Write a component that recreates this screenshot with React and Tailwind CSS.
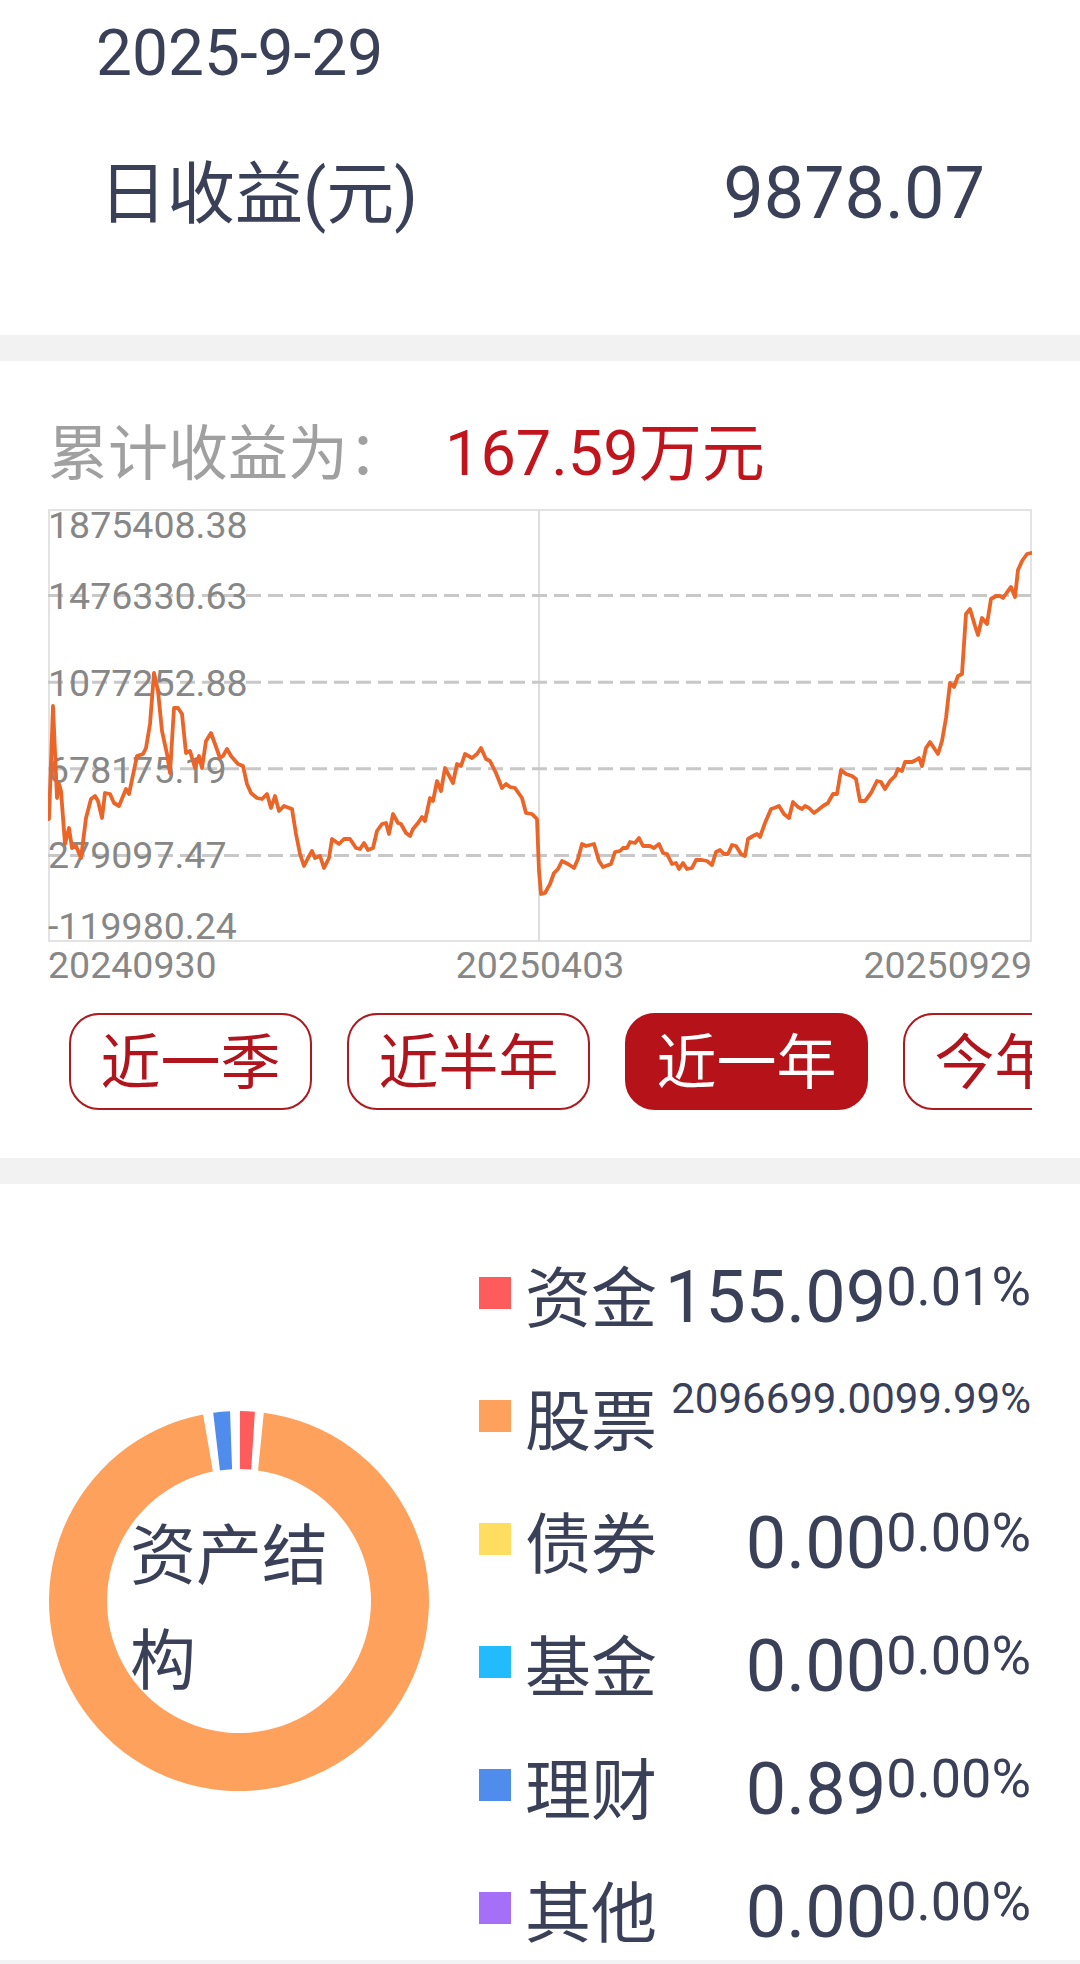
import React from "react";

const DARK = "#3a4058";

const PTS = [
  [49,818],[53,705],[57,797],[59,783],[61,790],[65,843],[69,827],[72,847],[76,845],[81,857],
  [86,817],[91,798],[95,795],[98,800],[102,817],[105,792],[110,793],[114,802],[119,805],[126,788],
  [129,793],[137,755],[143,753],[146,747],[150,723],[154,672],[158,690],[162,730],[167,753],[170,772],
  [174,707],[178,707],[182,713],[186,752],[190,750],[195,767],[199,755],[202,767],[206,740],[211,732],
  [215,743],[220,757],[223,755],[227,748],[231,755],[238,763],[243,765],[247,783],[251,792],[257,797],
  [262,798],[267,793],[271,807],[275,795],[279,810],[284,805],[292,808],[296,833],[300,853],[304,865],
  [308,857],[312,850],[315,857],[320,855],[324,867],[329,857],[332,838],[339,843],[344,838],[350,838],
  [356,847],[360,848],[364,842],[368,849],[373,847],[377,830],[382,823],[386,822],[389,833],[393,813],
  [398,822],[401,823],[406,832],[410,835],[413,828],[418,822],[422,816],[425,820],[430,797],[433,800],
  [437,780],[441,790],[445,767],[453,782],[457,763],[461,765],[465,753],[472,757],[477,753],[481,747],
  [486,758],[490,760],[496,772],[502,787],[506,783],[510,786],[515,787],[522,797],[526,812],[532,813],
  [537,818],[539,870],[541,893],[545,892],[550,883],[554,872],[558,868],[562,860],[568,863],[574,867],
  [578,858],[582,843],[586,845],[594,843],[599,860],[603,866],[611,863],[615,851],[620,850],[623,847],
  [627,847],[630,841],[635,842],[639,837],[643,845],[650,845],[654,847],[659,843],[663,852],[667,853],
  [672,863],[676,862],[679,868],[683,862],[687,868],[692,867],[696,859],[702,859],[707,860],[712,864],
  [716,851],[720,849],[724,853],[728,853],[732,844],[736,845],[741,853],[745,855],[748,838],[753,835],
  [757,833],[760,836],[765,822],[771,808],[774,807],[779,805],[784,813],[789,817],[793,801],[798,806],
  [802,808],[805,805],[809,807],[814,812],[818,809],[823,805],[828,802],[829,800],[833,793],[837,793],
  [841,769],[846,773],[852,775],[856,778],[860,800],[865,800],[871,792],[877,780],[881,781],[885,788],
  [890,780],[895,775],[898,768],[902,770],[905,761],[912,761],[916,759],[919,757],[922,765],[926,747],
  [930,741],[934,747],[938,753],[942,740],[946,717],[950,682],[954,686],[958,675],[962,673],[966,613],
  [970,608],[975,625],[978,634],[982,617],[987,623],[991,598],[996,595],[1000,595],[1003,597],[1008,590],
  [1011,586],[1015,596],[1018,569],[1022,560],[1027,553],[1031,552]
];

function Chart() {
  const d = PTS.map((p, i) => (i ? "L" : "M") + p[0] + " " + p[1]).join(" ");
  const grid = [594.6, 681.2, 767.8, 854.4];
  const labels = [
    ["1875408.38", 537],
    ["1476330.63", 608],
    ["1077252.88", 695],
    ["678175.19", 782],
    ["279097.47", 867],
    ["-119980.24", 938],
  ];
  return (
    <svg width="984" height="433" viewBox="48 508 984 433" className="block">
      <rect x="49" y="509" width="982" height="431" fill="#ffffff" stroke="#e3e3e3" strokeWidth="2" />
      <line x1="539" y1="508" x2="539" y2="941" stroke="#dedede" strokeWidth="2" />
      {grid.map((y) => (
        <line key={y} x1="48" x2="1032" y1={y} y2={y} stroke="#c8c8c8" strokeWidth="3" strokeDasharray="15 7" />
      ))}
      {labels.map(([t, y]) => (
        <text key={t} x="48" y={y} fontSize="37.5" fill="#878787" fontFamily="Roboto, sans-serif">
          {t}
        </text>
      ))}
      <path d={d} fill="none" stroke="#eb6428" strokeWidth="3.8" strokeLinejoin="round" strokeLinecap="round" />
    </svg>
  );
}

function arcPath(cx, cy, R, r, a1o, a2o, a1i, a2i) {
  const rad = (a) => (a * Math.PI) / 180;
  const pt = (rho, a) => [cx + rho * Math.sin(rad(a)), cy - rho * Math.cos(rad(a))];
  const [x1, y1] = pt(R, a1o);
  const [x2, y2] = pt(R, a2o);
  const [x3, y3] = pt(r, a2i);
  const [x4, y4] = pt(r, a1i);
  const lo = a2o - a1o > 180 ? 1 : 0;
  const li = a2i - a1i > 180 ? 1 : 0;
  return `M${x1} ${y1} A${R} ${R} 0 ${lo} 1 ${x2} ${y2} L${x3} ${y3} A${r} ${r} 0 ${li} 0 ${x4} ${y4} Z`;
}

function Donut() {
  const cx = 191, cy = 191, R = 190, r = 132;
  const segs = [
    { c: "#fe5c5c", o: [0.3, 4.8], i: [0.4, 5.3] },
    { c: "#fda15c", o: [7.5, 349.1], i: [8.3, 348.6] },
    { c: "#4f8ceb", o: [352.2, 357.3], i: [351.7, 357.0] },
  ];
  return (
    <div className="relative w-[382px] h-[382px] shrink-0 ml-[48px]">
      <svg width="382" height="382" viewBox="0 0 382 382" className="block">
        {segs.map((s) => (
          <path key={s.c} d={arcPath(cx, cy, R, r, s.o[0], s.o[1], s.i[0], s.i[1])} fill={s.c} />
        ))}
      </svg>
      <div className="absolute left-[82px] top-[94px] w-[204px] text-[66px] leading-[105px]" style={{ color: DARK }}>
        资产结构
      </div>
    </div>
  );
}

const LEGEND = [
  { name: "资金", color: "bg-[#fe5c5c]", value: "155.09", pct: "0.01%" },
  { name: "股票", color: "bg-[#fea15c]", value: "2096699.00", pct: "99.99%", small: true },
  { name: "债券", color: "bg-[#fedd60]", value: "0.00", pct: "0.00%" },
  { name: "基金", color: "bg-[#22bbfd]", value: "0.00", pct: "0.00%" },
  { name: "理财", color: "bg-[#4f8ceb]", value: "0.89", pct: "0.00%" },
  { name: "其他", color: "bg-[#a66ff7]", value: "0.00", pct: "0.00%" },
];

function LegendRow({ item }) {
  return (
    <div className="flex items-start h-[80px]">
      <div className={`w-[32px] h-[32px] mt-[24px] shrink-0 ${item.color}`} />
      <div className="ml-[14px] mt-[14px] text-[66px] leading-[66px] whitespace-nowrap">{item.name}</div>
      <div className="ml-auto flex items-start whitespace-nowrap">
        {item.small ? (
          <>
            <span className="mt-[2px] text-[42px] leading-[42px]">{item.value}</span>
            <span className="mt-[2px] text-[42px] leading-[42px]">{item.pct}</span>
          </>
        ) : (
          <>
            <span className="mt-[9px] text-[72px] leading-[72px]">{item.value}</span>
            <span className="mt-[7px] text-[54px] leading-[54px]">{item.pct}</span>
          </>
        )}
      </div>
    </div>
  );
}

const BUTTONS = ["近一季", "近半年", "近一年", "今年以来"];

export default function App() {
  return (
    <div
      className="w-[1080px] min-h-[1964px] bg-white overflow-hidden font-[Roboto,'Noto_Sans_CJK_SC',sans-serif]"
      style={{ color: DARK }}
    >
      {/* Section 1 */}
      <div className="h-[335px] pt-[22px]">
        <div className="pl-[96px] text-[64px] leading-[64px]">2025-9-29</div>
        <div className="mt-[68px] flex items-baseline justify-between pl-[99px] pr-[95px]">
          <span className="text-[68px] leading-[80px]">日收益(元)</span>
          <span className="text-[72px] leading-[80px]">9878.07</span>
        </div>
      </div>

      <div className="h-[26px] bg-[#f2f2f2]" />

      {/* Section 2 */}
      <div className="pt-[58px] pb-[48px]">
        <div className="flex items-baseline px-[48px]">
          <span className="text-[60px] leading-[70px] text-[#a0a0a0]">累计收益为：</span>
          <span className="ml-[37px] text-[63px] leading-[70px] text-[#c1141c]">167.59万元</span>
        </div>
        <div className="mt-[19px] ml-[48px]">
          <Chart />
        </div>
        <div className="mt-[5px] mx-[48px] flex justify-between text-[37.5px] leading-[37px] text-[#878787]">
          <span>20240930</span>
          <span>20250403</span>
          <span>20250929</span>
        </div>
        <div className="mt-[29px] mx-[48px] overflow-hidden">
          <div className="flex gap-[35px] pl-[21px]">
            {BUTTONS.map((b, i) => (
              <div
                key={b}
                className={
                  i === 2
                    ? "shrink-0 h-[97px] px-[29.5px] rounded-[30px] border-[2.5px] border-[#b5121a] bg-[#b5121a] text-white flex items-center justify-center text-[60px] leading-none whitespace-nowrap"
                    : "shrink-0 h-[97px] px-[29.5px] rounded-[30px] border-[2.5px] border-[#ad1a20] bg-white text-[#b0141c] flex items-center justify-center text-[60px] leading-none whitespace-nowrap"
                }
              >
                <span className="mt-[4px]">{b}</span>
              </div>
            ))}
          </div>
        </div>
      </div>

      <div className="h-[26px] bg-[#f2f2f2]" />

      {/* Section 3 */}
      <div className="pt-[69px] pb-[12px] flex items-center">
        <Donut />
        <div className="ml-[49px] mr-[49px] flex-1 flex flex-col gap-[43px]">
          {LEGEND.map((it) => (
            <LegendRow key={it.name} item={it} />
          ))}
        </div>
      </div>

      <div className="h-[26px] bg-[#f2f2f4]" />
    </div>
  );
}
